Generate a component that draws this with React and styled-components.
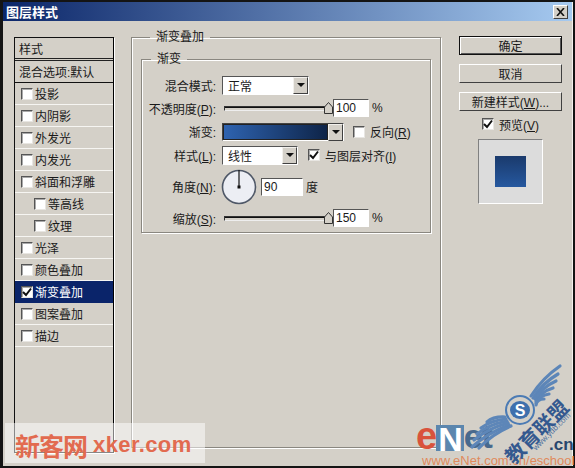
import React from "react";
import styled, { createGlobalStyle } from "styled-components";

const Global = createGlobalStyle`
  html, body { margin: 0; padding: 0; background: #141414; }
  body { width: 575px; height: 468px; overflow: hidden; }
  * { box-sizing: border-box; }
`;

const Dialog = styled.div`
  position: relative;
  width: 575px;
  height: 468px;
  padding: 2px 2px 2px 3px;
  background: #141414;
  font-family: "Liberation Sans", "Noto Sans CJK SC", sans-serif;
  font-size: 12px;
  color: #1a1a1a;
  overflow: hidden;
`;

const Frame = styled.div`
  height: 100%;
  display: flex;
  flex-direction: column;
  background: #d4d0c8;
  border-right: 1px solid #f4f2ee;
`;

const TitleBar = styled.div`
  height: 19px;
  flex: none;
  display: flex;
  align-items: center;
  justify-content: space-between;
  padding: 0 4px 0 3px;
  background: linear-gradient(90deg, #0b2669, #a6caf0);
  color: #fff;
  font-weight: 700;
  font-size: 13px;
`;

const CloseButton = styled.div`
  width: 15px;
  height: 14px;
  background: #d4d0c8;
  border: 1px solid;
  border-color: #fff #404040 #404040 #fff;
  display: flex;
  align-items: center;
  justify-content: center;
`;

const Body = styled.div`
  flex: 1;
  min-height: 0;
  display: flex;
  gap: 18px;
  padding: 9px 9px 13px 11px;
`;

const StyleList = styled.div`
  width: 100px;
  flex: none;
  margin: 7px -1px 0 0;
  border: 1px solid #111;
  border-right-color: #000;
  box-shadow: 1px 1px 0 #fff;
`;

const ListHeader = styled.div`
  height: 23px;
  display: flex;
  align-items: center;
  padding-left: 4px;
  border-bottom: 3px double #222;
`;

const BlendRow = styled.div`
  height: 22px;
  display: flex;
  align-items: center;
  padding-left: 4px;
  border-bottom: 1px solid #111;
`;

const ListRow = styled.div`
  height: 22px;
  display: flex;
  align-items: center;
  gap: 2px;
  padding-left: ${(p) => (p.$nested ? 19 : 6)}px;
  border-bottom: 1px solid ${(p) => (p.$active ? "#0a246a" : "#f6f5f2")};
  background: ${(p) => (p.$active ? "#0a246a" : "transparent")};
  color: ${(p) => (p.$active ? "#fff" : "#1a1a1a")};
`;

const CheckBox = styled.span`
  width: 12px;
  height: 12px;
  flex: none;
  display: inline-flex;
  align-items: center;
  justify-content: center;
  background: #fff;
  border: 1px solid;
  border-color: #555 #e8e6e2 #e8e6e2 #555;
  box-shadow: inset 1px 1px 0 #aaa;
`;

const MainColumn = styled.div`
  width: 310px;
  flex: none;
`;

const Group = styled.fieldset`
  margin: 0;
  padding: ${(p) => p.$pad};
  height: ${(p) => p.$height}px;
  border: 1px solid #8a8780;
  box-shadow: 1px 1px 0 #fff, inset 1px 1px 0 #fff;
`;

const GroupTitle = styled.legend`
  margin-left: 9px;
  padding: 0 6px;
  line-height: 14px;
`;

const Form = styled.div`
  display: grid;
  grid-template-rows: 22px 24px 23px 24px 39px 24px;
`;

const FormRow = styled.div`
  display: flex;
  align-items: center;
`;

const FieldLabel = styled.div`
  width: 74px;
  flex: none;
  margin-right: 6px;
  text-align: right;
  white-space: nowrap;
`;

const Select = styled.div`
  width: ${(p) => p.$width}px;
  height: 19px;
  display: flex;
  align-items: center;
  justify-content: space-between;
  padding-left: 5px;
  background: #fff;
  border: 1px solid;
  border-color: #555 #fff #fff #555;
`;

const ArrowButton = styled.span`
  width: 15px;
  height: 17px;
  flex: none;
  display: flex;
  align-items: center;
  justify-content: center;
  background: #d4d0c8;
  border: 1px solid;
  border-color: #f2f0ec #404040 #404040 #f2f0ec;
  &::after {
    content: "";
    border: 4px solid transparent;
    border-top: 4px solid #111;
    border-bottom: 0;
  }
`;

const Slider = styled.div`
  position: relative;
  width: 106px;
  height: 5px;
  margin: 0 3px 0 2px;
  background: #d4d0c8;
  border: 1px solid;
  border-color: #333 #eee #eee #333;
  box-shadow: inset 0 1px 0 #111;
`;

const SliderThumb = styled.svg`
  position: absolute;
  right: -4px;
  top: -5px;
`;

const NumberInput = styled.div`
  width: ${(p) => p.$width}px;
  height: 18px;
  flex: none;
  padding-left: 2px;
  line-height: 16px;
  background: #fff;
  border: 1px solid;
  border-color: #555 #fff #fff #555;
  font-family: "Liberation Sans", sans-serif;
`;

const Unit = styled.span`
  margin-left: 3px;
`;

const GradientField = styled.div`
  width: 122px;
  height: 18px;
  display: flex;
  border: 1px solid;
  border-color: #444 #fff #fff #444;
`;

const GradientSwatch = styled.div`
  flex: 1;
  background: linear-gradient(90deg, #2e63b0, #0e2448);
  border: 1px solid #222;
`;

const InlineCheck = styled.label`
  display: flex;
  align-items: center;
  gap: 5px;
  margin-left: ${(p) => p.$gap}px;
  white-space: nowrap;
`;

const AngleDial = styled.svg`
  flex: none;
  margin: 0 4px 0 -1px;
`;

const ActionColumn = styled.div`
  width: 103px;
  flex: none;
  display: flex;
  flex-direction: column;
  align-items: center;
  padding-top: 6px;
`;

const Button = styled.div`
  width: 103px;
  height: 19px;
  margin-bottom: 9px;
  display: flex;
  align-items: center;
  justify-content: center;
  background: #d4d0c8;
  border: 1px solid;
  border-color: ${(p) =>
    p.$primary ? "#111" : "#fff #404040 #404040 #fff"};
  box-shadow: ${(p) =>
    p.$primary ? "inset 1px 1px 0 #fff, inset -1px -1px 0 #555" : "none"};
`;

const PreviewCheck = styled.label`
  display: flex;
  align-items: center;
  gap: 5px;
  height: 18px;
  margin: -5px 0 6px;
`;

const PreviewBox = styled.div`
  width: 65px;
  height: 65px;
  display: flex;
  align-items: center;
  justify-content: center;
  background: #dcdcdc;
  border: 1px solid;
  border-color: #808080 #fff #fff #808080;
`;

const PreviewSwatch = styled.div`
  width: 31px;
  height: 31px;
  background: linear-gradient(180deg, #1a3a6c, #26589f);
`;

const Watermark = styled.div`
  position: absolute;
  left: 5px;
  top: 423px;
  width: 200px;
  height: 40px;
  display: flex;
  align-items: center;
  gap: 6px;
  padding: 3px 0 0 10px;
  background: rgba(255, 255, 255, 0.5);
  color: #e26b50;
  font-weight: 700;
`;

const WatermarkCn = styled.span`
  font-size: 25px;
  letter-spacing: -1px;
`;

const WatermarkEn = styled.span`
  font-size: 22px;
  letter-spacing: 0.4px;
`;

const LogoMark = styled.div`
  position: absolute;
  left: 416px;
  top: 421px;
  display: flex;
  align-items: flex-end;
  font-weight: 700;
  font-size: 38px;
  line-height: 30px;
  letter-spacing: -1px;
`;

const LogoE = styled.span`
  color: #d9533c;
`;

const LogoN = styled.span`
  color: #fff;
  background: #5b86ae;
  height: 26px;
  line-height: 28px;
  padding: 0 2px;
  font-size: 34px;
`;

const LogoRest = styled.span`
  color: #49698d;
  font-size: 34px;
`;

const LogoCn = styled.div`
  position: absolute;
  left: 549px;
  top: 436px;
  color: #29476d;
  font-size: 17px;
  font-weight: 700;
  line-height: 18px;
`;

const LogoUrl = styled.div`
  position: absolute;
  left: 422px;
  top: 454px;
  color: #e08a5c;
  font-size: 13px;
  line-height: 14px;
  white-space: nowrap;
`;

const LogoWings = styled.svg`
  position: absolute;
  left: 465px;
  top: 360px;
`;

const StampText = styled.div`
  position: absolute;
  left: 497px;
  top: 421px;
  color: #34598f;
  font-weight: 700;
  font-size: 20px;
  line-height: 22px;
  white-space: nowrap;
  transform: rotate(-45deg);
`;

const StampUrl = styled.div`
  position: absolute;
  left: 527px;
  top: 427px;
  color: #4b6f9e;
  font-size: 8px;
  line-height: 9px;
  white-space: nowrap;
  transform: rotate(-45deg);
`;

const Tick = () => (
  <svg width="10" height="10" viewBox="0 0 10 10">
    <path d="M1 5 L4 8 L9 1.5" fill="none" stroke="#111" strokeWidth="2" />
  </svg>
);

const Thumb = () => (
  <SliderThumb width="9" height="12" viewBox="0 0 9 12">
    <path d="M.5 11.5 V5 L4.5 .5 L8.5 5 V11.5 Z" fill="#d4d0c8" stroke="#333" />
  </SliderThumb>
);

const styleRows = [
  { label: "投影" },
  { label: "内阴影" },
  { label: "外发光" },
  { label: "内发光" },
  { label: "斜面和浮雕" },
  { label: "等高线", nested: true },
  { label: "纹理", nested: true },
  { label: "光泽" },
  { label: "颜色叠加" },
  { label: "渐变叠加", active: true },
  { label: "图案叠加" },
  { label: "描边" },
];

// feather start and tip points, in the wing svg's coordinates
const rightFeathers = [
  [66, 36, 95, 6],
  [68, 38, 93, 14],
  [70, 39, 91, 21],
  [71, 41, 88, 28],
  [71, 43, 84, 34],
  [71, 45, 79, 39],
];

const leftFeathers = [
  [40, 57, 22, 62],
  [41, 59, 16, 68],
  [42, 61, 12, 74],
  [43, 63, 9, 80],
  [44, 65, 7, 87],
  [46, 66, 14, 88],
];

export default function App() {
  return (
    <>
      <Global />
      <Dialog>
        <Frame>
          <TitleBar>
            <span>图层样式</span>
            <CloseButton>
              <svg width="9" height="8" viewBox="0 0 9 8">
                <path d="M1 0 L8 8 M8 0 L1 8" stroke="#111" strokeWidth="1.6" />
              </svg>
            </CloseButton>
          </TitleBar>
          <Body>
            <StyleList>
              <ListHeader>样式</ListHeader>
              <BlendRow>混合选项:默认</BlendRow>
              {styleRows.map((row) => (
                <ListRow key={row.label} $nested={row.nested} $active={row.active}>
                  <CheckBox>{row.active && <Tick />}</CheckBox>
                  {row.label}
                </ListRow>
              ))}
            </StyleList>
            <MainColumn>
              <Group $pad="8px 9px 0" $height={418}>
                <GroupTitle>渐变叠加</GroupTitle>
                <Group $pad="8px 0 0 0" $height={181}>
                  <GroupTitle>渐变</GroupTitle>
                  <Form>
                    <FormRow>
                      <FieldLabel>混合模式:</FieldLabel>
                      <Select $width={87}>
                        正常
                        <ArrowButton />
                      </Select>
                    </FormRow>
                    <FormRow>
                      <FieldLabel>不透明度(<u>P</u>):</FieldLabel>
                      <Slider><Thumb /></Slider>
                      <NumberInput $width={36}>100</NumberInput>
                      <Unit>%</Unit>
                    </FormRow>
                    <FormRow>
                      <FieldLabel>渐变:</FieldLabel>
                      <GradientField>
                        <GradientSwatch />
                        <ArrowButton />
                      </GradientField>
                      <InlineCheck $gap={9}>
                        <CheckBox />
                        <span>反向(<u>R</u>)</span>
                      </InlineCheck>
                    </FormRow>
                    <FormRow>
                      <FieldLabel>样式(<u>L</u>):</FieldLabel>
                      <Select $width={76}>
                        线性
                        <ArrowButton />
                      </Select>
                      <InlineCheck $gap={10}>
                        <CheckBox><Tick /></CheckBox>
                        <span>与图层对齐(<u>I</u>)</span>
                      </InlineCheck>
                    </FormRow>
                    <FormRow>
                      <FieldLabel>角度(<u>N</u>):</FieldLabel>
                      <AngleDial width="36" height="36" viewBox="0 0 36 36">
                        <circle cx="18" cy="18" r="16.5" fill="#eceef4" stroke="#4f5867" strokeWidth="1.6" />
                        <path d="M18 1 V18" stroke="#111" strokeWidth="1.2" />
                        <rect x="16.5" y="16.5" width="3" height="3" fill="#111" />
                      </AngleDial>
                      <NumberInput $width={42}>90</NumberInput>
                      <Unit>度</Unit>
                    </FormRow>
                    <FormRow>
                      <FieldLabel>缩放(<u>S</u>):</FieldLabel>
                      <Slider><Thumb /></Slider>
                      <NumberInput $width={36}>150</NumberInput>
                      <Unit>%</Unit>
                    </FormRow>
                  </Form>
                </Group>
              </Group>
            </MainColumn>
            <ActionColumn>
              <Button $primary>确定</Button>
              <Button>取消</Button>
              <Button><span>新建样式(<u>W</u>)...</span></Button>
              <PreviewCheck>
                <CheckBox><Tick /></CheckBox>
                <span>预览(<u>V</u>)</span>
              </PreviewCheck>
              <PreviewBox>
                <PreviewSwatch />
              </PreviewBox>
            </ActionColumn>
          </Body>
        </Frame>
        <Watermark>
          <WatermarkCn>新客网</WatermarkCn>
          <WatermarkEn>xker.com</WatermarkEn>
        </Watermark>
        <LogoMark>
          <LogoE>e</LogoE>
          <LogoN>N</LogoN>
          <LogoRest>et</LogoRest>
        </LogoMark>
        <LogoCn>.cn</LogoCn>
        <LogoUrl>www.eNet.com.cn/eschool</LogoUrl>
        <LogoWings width="110" height="90" viewBox="0 0 110 90">
          {[...rightFeathers, ...leftFeathers].map(([x1, y1, x2, y2]) => (
            <path
              key={`${x2}-${y2}`}
              d={`M${x1} ${y1} Q${(x1 + x2) / 2 - 3} ${(y1 + y2) / 2 - 3} ${x2} ${y2}`}
              fill="none"
              stroke="#5d86b8"
              strokeWidth="3.2"
              strokeLinecap="round"
            />
          ))}
          <circle cx="55" cy="50" r="14" fill="#d4d0c8" stroke="#4c7bb4" strokeWidth="2" />
          <ellipse cx="55" cy="50" rx="10" ry="9" fill="#3f70ad" />
          <text x="55" y="56" textAnchor="middle" fontSize="16" fontWeight="700" fill="#fff" fontFamily="Liberation Sans">S</text>
        </LogoWings>
        <StampText>教育联盟</StampText>
        <StampUrl>www.ydb.com</StampUrl>
      </Dialog>
    </>
  );
}
